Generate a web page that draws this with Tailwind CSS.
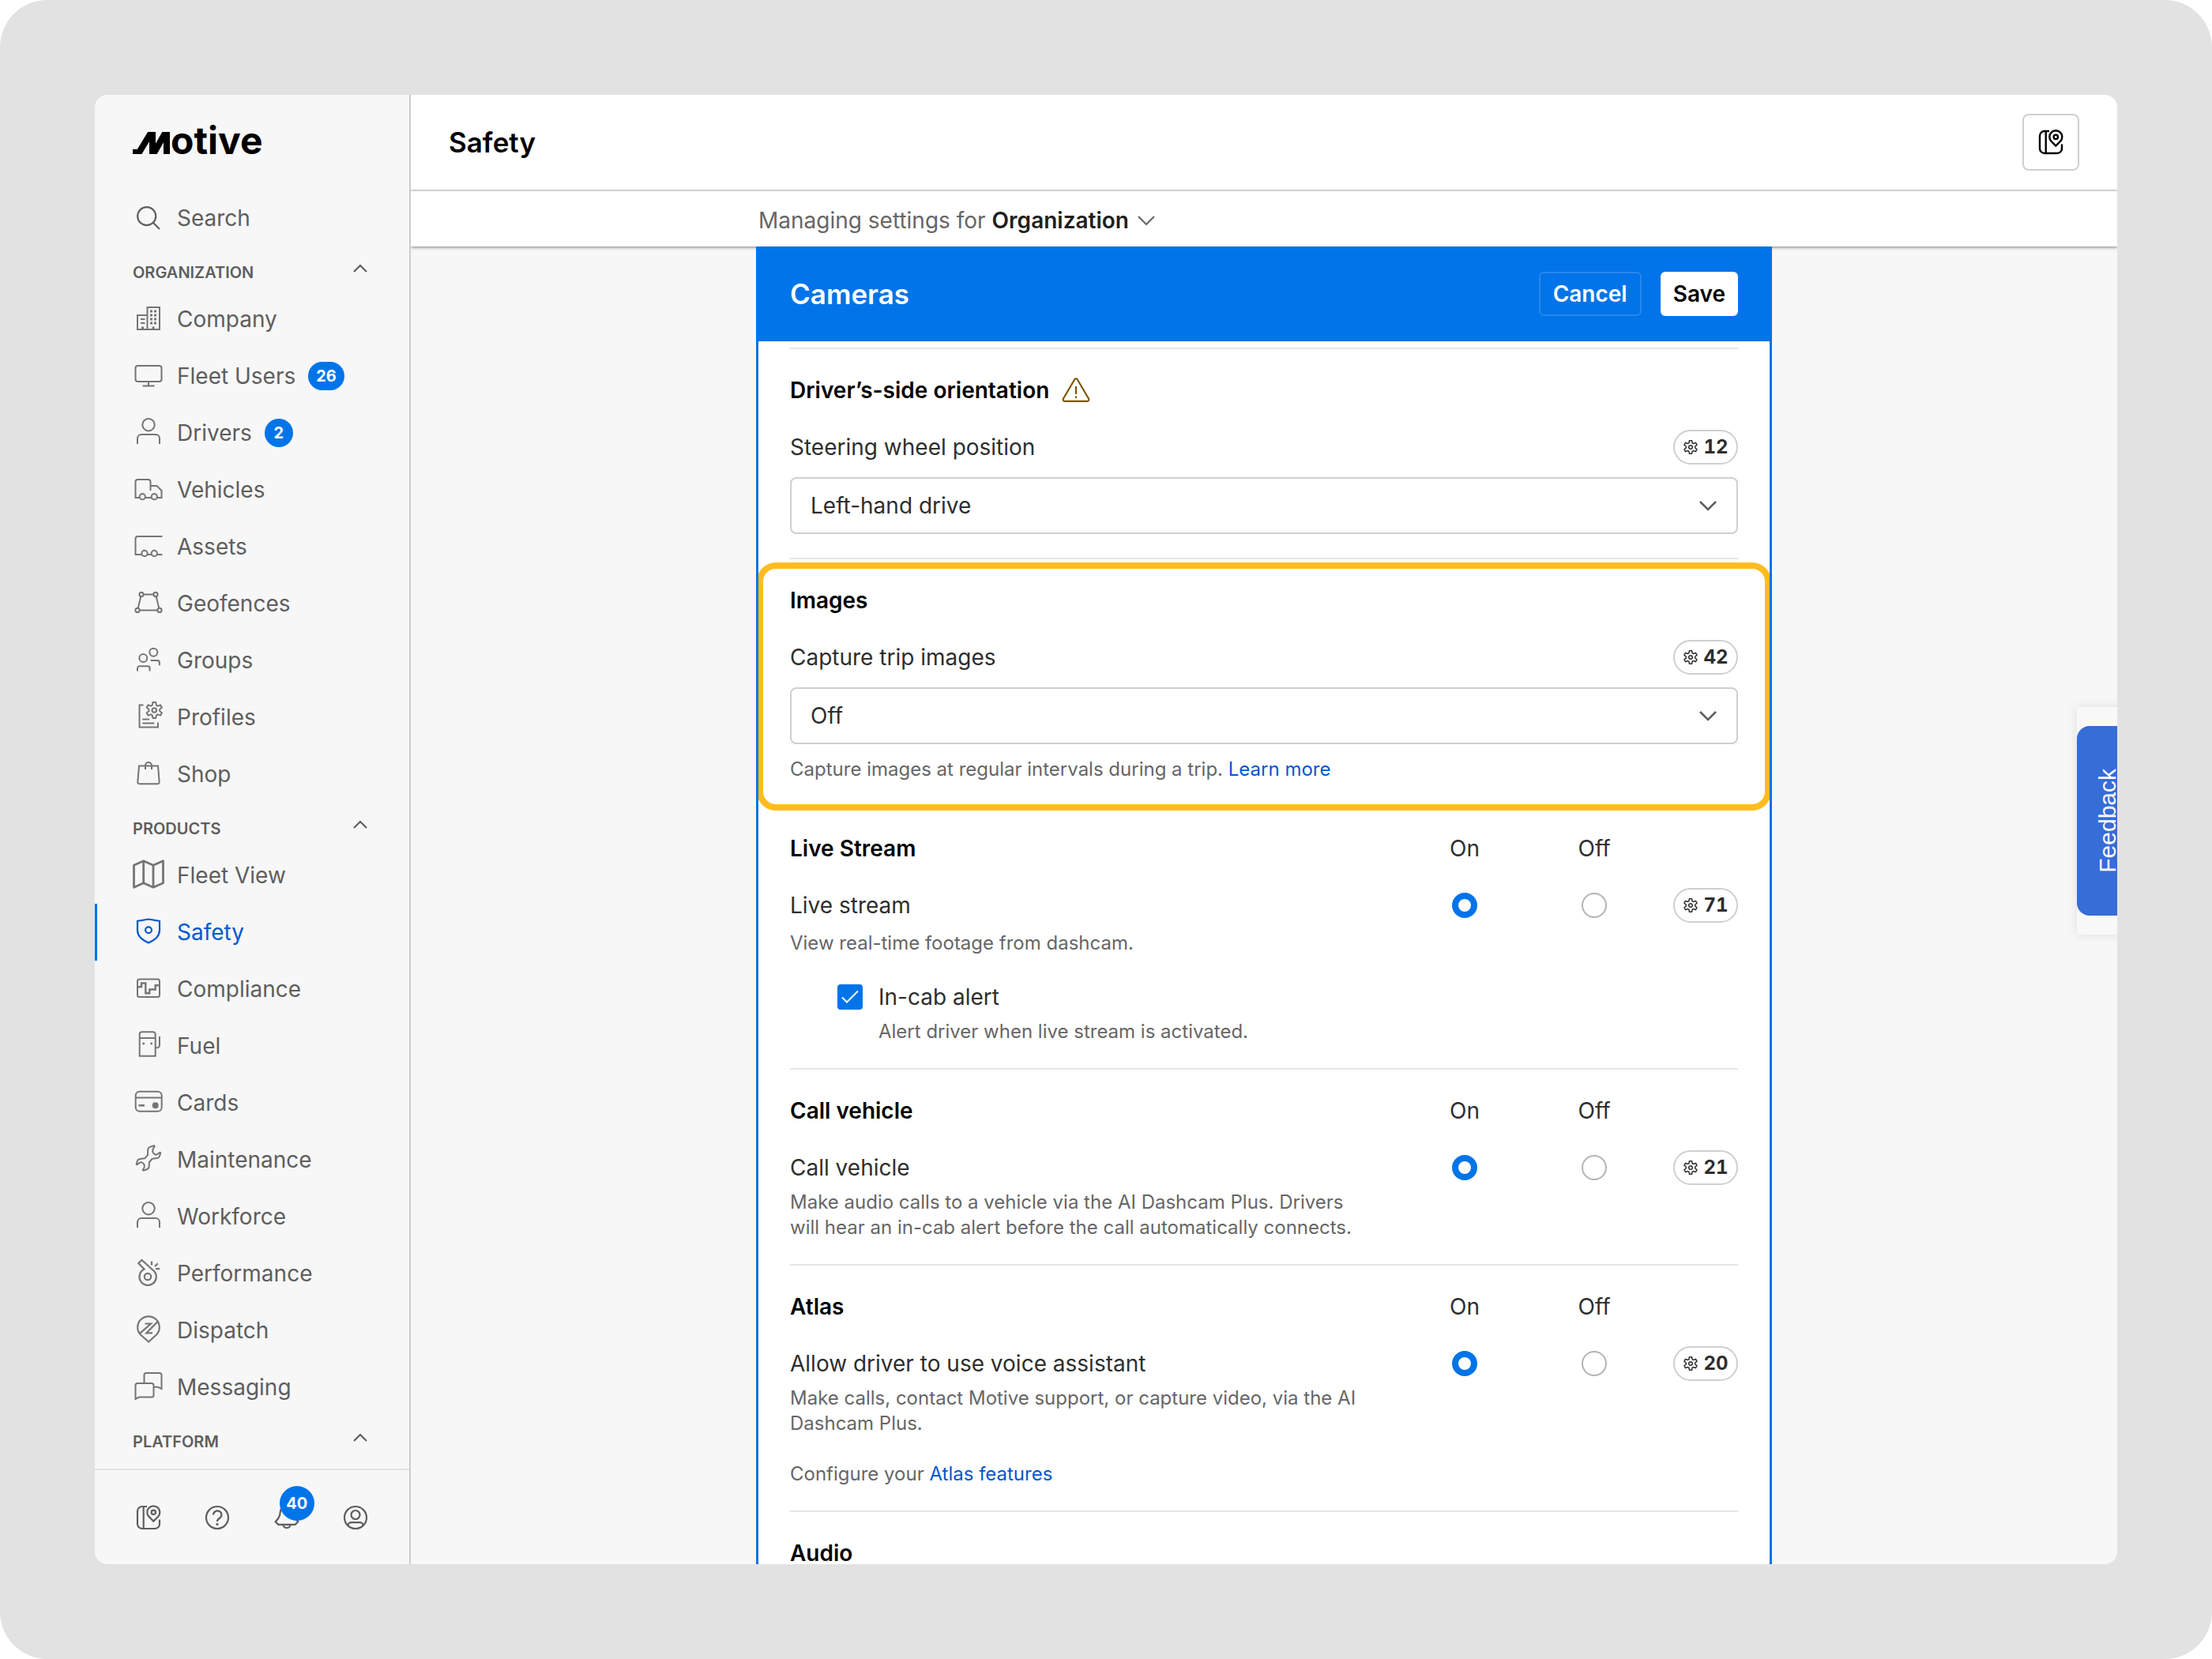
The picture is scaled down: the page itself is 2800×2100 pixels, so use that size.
<!DOCTYPE html>
<html lang="en">
<head>
  <meta charset="UTF-8">
  <meta name="viewport" content="width=device-width, initial-scale=1.0">
  <title>Safety - Cameras</title>
  <script src="https://cdn.jsdelivr.net/npm/@tailwindcss/browser@4"></script>
</head>
<body class="bg-white font-['Inter',sans-serif] text-[28px] leading-[44px] text-[#2e2e2e]">

<!-- Shared icons -->
<svg class="hidden">
  <symbol id="gear" viewBox="-12 -12 24 24" overflow="visible">
    <path d="M-2.6-6.3-1.8-10H1.8L2.6-6.3 4.2-5.4 7.8-6.6 9.6-3.4 6.8-.9V.9L9.6 3.4 7.8 6.6 4.2 5.4 2.6 6.3 1.8 10H-1.8L-2.6 6.3-4.2 5.4-7.8 6.6-9.6 3.4-6.8.9V-.9L-9.6-3.4-7.8-6.6-4.2-5.4Z"/>
    <circle r="2.8"/>
  </symbol>
  <symbol id="person" viewBox="0 0 40 40">
    <circle cx="20" cy="9.7" r="7.7"/>
    <path d="M6 34v-7a5 5 0 0 1 5-5h18a5 5 0 0 1 5 5v7"/>
  </symbol>
  <symbol id="map-book" viewBox="0 0 40 40">
    <path d="M18 6h-6a6 6 0 0 0-6 6v16a6 6 0 0 0 6 6h16a6 6 0 0 0 6-6v-5.5M13.7 6v28M26.3 24.6l-5.7-5.7a8 8 0 1 1 11.4 0z"/>
    <circle cx="26.3" cy="13.3" r="2.7"/>
  </symbol>
  <symbol id="chevron-up" viewBox="0 0 28 28">
    <path d="M6 18l8-8 8 8"/>
  </symbol>
  <symbol id="chevron-down" viewBox="0 0 28 28">
    <path d="M4 9l10 10L24 9"/>
  </symbol>
</svg>

<div class="h-screen rounded-[60px] bg-[#e2e2e2] p-[120px]">
  <div class="flex h-full overflow-hidden rounded-2xl bg-[#f7f7f7]">

    <!-- Sidebar -->
    <aside class="flex w-[400px] shrink-0 flex-col border-r-2 border-[#cccccc] text-[#5e5e5e]">
      <a href="#" aria-label="Motive" class="flex h-[120px] shrink-0 items-baseline px-12 pt-[34px] text-black">
        <svg class="h-7 w-12" viewBox="0 0 48 28" fill="none" stroke="currentColor" stroke-width="8" stroke-miterlimit="10">
          <path d="M0 26H8L25-2V30L43-2V30"/>
        </svg>
        <span class="text-[48px] font-bold leading-[48px]">otive</span>
      </a>

      <nav class="min-h-0 flex-1 overflow-hidden">
        <a href="#" class="flex h-[72px] items-center gap-4 px-12">
          <svg class="size-10" viewBox="0 0 40 40" fill="none" stroke="currentColor" stroke-width="2.2"><circle cx="17.7" cy="17.7" r="11.5"/><path d="M26 26l8 8"/></svg>
          Search
        </a>

        <button type="button" class="flex h-14 w-full items-center justify-between px-12 text-[20px] font-semibold">
          <span class="pt-[10px]">ORGANIZATION</span>
          <svg class="size-7" fill="none" stroke="currentColor" stroke-width="2.2"><use href="#chevron-up"/></svg>
        </button>
        <ul>
          <li><a href="#" class="flex h-[72px] items-center gap-4 px-12">
            <svg class="size-10 text-[#757575]" viewBox="0 0 40 40" fill="none" stroke="currentColor" stroke-width="2">
              <path d="M18.5 33V5H34v28H6V15h12.5M10 20h5.5M10 25h5.5"/>
              <path stroke-width="3" d="M22 10h3M27 10h3M22 15h3M27 15h3M22 20h3M27 20h3M22 25h3M27 25h3M24.5 31h3M11 31h3"/>
            </svg>
            Company
          </a></li>
          <li><a href="#" class="flex h-[72px] items-center gap-4 px-12">
            <svg class="size-10 text-[#757575]" viewBox="0 0 40 40" fill="none" stroke="currentColor" stroke-width="2"><rect x="3.5" y="7" width="33" height="20" rx="3"/><path d="M20 27v5M12.5 32.5h15"/></svg>
            Fleet Users
            <span class="flex h-9 min-w-9 items-center justify-center rounded-full bg-[#0074e8] px-[10px] text-[20px] font-bold text-white">26</span>
          </a></li>
          <li><a href="#" class="flex h-[72px] items-center gap-4 px-12">
            <svg class="size-10 text-[#757575]" fill="none" stroke="currentColor" stroke-width="2"><use href="#person"/></svg>
            Drivers
            <span class="flex h-9 min-w-9 items-center justify-center rounded-full bg-[#0074e8] px-[10px] text-[20px] font-bold text-white">2</span>
          </a></li>
          <li><a href="#" class="flex h-[72px] items-center gap-4 px-12">
            <svg class="size-10 text-[#757575]" viewBox="0 0 40 40" fill="none" stroke="currentColor" stroke-width="2"><path d="M9 30H3.5V10a3 3 0 0 1 3-3h13a3 3 0 0 1 3 3v11M22.5 15h8l6 6v9H31M16 30h8"/><circle cx="12.3" cy="28.7" r="3.6"/><circle cx="27.3" cy="28.7" r="3.6"/></svg>
            Vehicles
          </a></li>
          <li><a href="#" class="flex h-[72px] items-center gap-4 px-12">
            <svg class="size-10 text-[#757575]" viewBox="0 0 40 40" fill="none" stroke="currentColor" stroke-width="2"><path d="M37.5 7h-31a3 3 0 0 0-3 3v20H11M18.7 30h5M31 30h6.5"/><circle cx="15" cy="28.4" r="3.6"/><circle cx="27.3" cy="28.4" r="3.6"/></svg>
            Assets
          </a></li>
          <li><a href="#" class="flex h-[72px] items-center gap-4 px-12">
            <svg class="size-10 text-[#757575]" viewBox="0 0 40 40" fill="none" stroke="currentColor" stroke-width="2"><circle cx="11" cy="8.4" r="2.6"/><circle cx="29" cy="8.4" r="2.6"/><circle cx="6" cy="28.4" r="2.6"/><circle cx="34" cy="28.4" r="2.6"/><path d="M13.6 8.4h12.8M8.6 28.4h22.8M10.3 11 6.7 25.9M29.7 11l3.6 14.9"/></svg>
            Geofences
          </a></li>
          <li><a href="#" class="flex h-[72px] items-center gap-4 px-12">
            <svg class="size-10 text-[#757575]" viewBox="0 0 40 40" fill="none" stroke="currentColor" stroke-width="2"><circle cx="13.3" cy="17" r="5"/><circle cx="26.3" cy="9.7" r="5"/><path d="M6 33.5V30a2.7 2.7 0 0 1 2.7-2.7h10.2a2.7 2.7 0 0 1 2.7 2.7v3.5M22.7 20h8.5a2.7 2.7 0 0 1 2.7 2.7v3.5"/></svg>
            Groups
          </a></li>
          <li><a href="#" class="flex h-[72px] items-center gap-4 px-12">
            <svg class="size-10 text-[#757575]" viewBox="0 0 40 40" fill="none" stroke="currentColor" stroke-width="2"><path d="M13.5 4.5h-5v28H32v-6M12.3 22.5h8.7M12.3 27.5h15"/><use href="#gear" x="15.3" y="-1" width="24" height="24"/></svg>
            Profiles
          </a></li>
          <li><a href="#" class="flex h-[72px] items-center gap-4 px-12">
            <svg class="size-10 text-[#757575]" viewBox="0 0 40 40" fill="none" stroke="currentColor" stroke-width="2"><path d="M8 9.5h24L33.7 30a2.2 2.2 0 0 1-2.2 2.3h-23A2.2 2.2 0 0 1 6.3 30zM16 14V9a4 4 0 0 1 8 0v5"/></svg>
            Shop
          </a></li>
        </ul>

        <button type="button" class="flex h-14 w-full items-center justify-between px-12 text-[20px] font-semibold">
          <span class="pt-[10px]">PRODUCTS</span>
          <svg class="size-7" fill="none" stroke="currentColor" stroke-width="2.2"><use href="#chevron-up"/></svg>
        </button>
        <ul>
          <li><a href="#" class="flex h-[72px] items-center gap-4 px-12">
            <svg class="size-10 text-[#757575]" viewBox="0 0 40 40" fill="none" stroke="currentColor" stroke-width="2.8" stroke-linejoin="round"><path d="M1.5 7.2 13.7 1.7 26 7.2l12.5-5.5v28L26 35.2l-12.3-5.5L1.5 35.2zM13.7 1.7v28M26 7.2v28"/></svg>
            Fleet View
          </a></li>
          <li><a href="#" aria-current="page" class="flex h-[72px] items-center gap-4 border-l-3 border-[#0074e8] pl-[45px] pr-12 text-[#0057d0]">
            <svg class="size-10" viewBox="0 0 40 40" fill="none" stroke="currentColor" stroke-width="2.2"><path d="M20 3.5 34 6v11.5C34 25 28 30 20 33.500 12 30 6 25 6 17.500V6z"/><circle cx="20" cy="17.3" r="3.9"/></svg>
            Safety
          </a></li>
          <li><a href="#" class="flex h-[72px] items-center gap-4 px-12">
            <svg class="size-10 text-[#757575]" viewBox="0 0 40 40" fill="none" stroke="currentColor" stroke-width="2"><rect x="6" y="7.5" width="28" height="22.5" rx="2.5"/><path stroke-width="2.4" d="M6 17.300h5v-4.800h5.300v12.800h5v-4.800h7.400v-5.200H34"/></svg>
            Compliance
          </a></li>
          <li><a href="#" class="flex h-[72px] items-center gap-4 px-12">
            <svg class="size-10 text-[#757575]" viewBox="0 0 40 40" fill="none" stroke="currentColor" stroke-width="2"><path d="M8.7 32.7V5.3a3 3 0 0 1 3-3h14a3 3 0 0 1 3 3v27.4zM8.7 10h20M34 8v11a3.3 3.3 0 0 1-3.3 3.3h-2"/><path stroke-width="2.6" d="M12.4 17h2.6M22.4 17H25"/></svg>
            Fuel
          </a></li>
          <li><a href="#" class="flex h-[72px] items-center gap-4 px-12">
            <svg class="size-10 text-[#757575]" viewBox="0 0 40 40" fill="none" stroke="currentColor" stroke-width="2"><rect x="3.7" y="5.7" width="33" height="25" rx="5"/><path d="M4 13.5h32"/><path stroke-width="2.6" d="M7.5 23.3H15"/><circle cx="28.7" cy="23.3" r="3" fill="currentColor"/></svg>
            Cards
          </a></li>
          <li><a href="#" class="flex h-[72px] items-center gap-4 px-12">
            <svg class="size-10 text-[#757575]" viewBox="0 0 40 40" fill="none" stroke="currentColor" stroke-width="2" stroke-linejoin="round"><path d="M19.2 7c.5-2 1.6-2.8 3.2-3.4l4.3-1.3c.8-.2 1.3.6.8 1.2L25.8 6c-1.3 3.300-.3 6.500 3 7.500 1.500.4 2.700-.2 3.700-1.300l1.300-1.100c.7-.6 1.600-.2 1.400.7l-1.300 4c-.5 1.500-1.600 2.200-3.100 2.300l-6 .6-3.800 4.300-.4 6c-.3 1.800-1.200 2.600-2.800 3.200l-4 1.400c-.9.2-1.400-.6-.8-1.300l1.300-1.700c1.500-3-.1-6.400-3-7.200-1.700-.5-2.900.2-3.900 1.300l-1.300 1.200c-.7.5-1.600.1-1.400-.7l1.300-4c.5-1.400 1.500-2.100 3-2.300l6.200-.6 3.800-4.200z"/></svg>
            Maintenance
          </a></li>
          <li><a href="#" class="flex h-[72px] items-center gap-4 px-12">
            <svg class="size-10 text-[#757575]" fill="none" stroke="currentColor" stroke-width="2"><use href="#person"/></svg>
            Workforce
          </a></li>
          <li><a href="#" class="flex h-[72px] items-center gap-4 px-12">
            <svg class="size-10 text-[#757575]" viewBox="0 0 40 40" fill="none" stroke="currentColor" stroke-width="2.2"><path d="M11.5 3 7.3 7l7.2 7.5a10.7 10.7 0 1 0 13 3zM24 4.5v5M31.7 7.3 28 11M29 14.2h5.3"/><circle cx="19" cy="24" r="4.2"/></svg>
            Performance
          </a></li>
          <li><a href="#" class="flex h-[72px] items-center gap-4 px-12">
            <svg class="size-10 text-[#757575]" viewBox="0 0 40 40" fill="none" stroke="currentColor" stroke-width="2.2"><path d="M20 34.5l-9.8-8.7a13.8 13.8 0 1 1 19.6 0zM9 23.8 23 11.5h-7.5M32 8.6 17.3 23.3H25"/></svg>
            Dispatch
          </a></li>
          <li><a href="#" class="flex h-[72px] items-center gap-4 px-12">
            <svg class="size-10 text-[#757575]" viewBox="0 0 40 40" fill="none" stroke="currentColor" stroke-width="2"><path d="M3.5 34.8V17.5A2.5 2.5 0 0 1 6 15h18a2.5 2.5 0 0 1 2.5 2.5V30a2.5 2.5 0 0 1-2.5 2.5H8zM14.5 15V4.5A2.5 2.5 0 0 1 17 2h17a2.5 2.5 0 0 1 2.5 2.5V22L32 19.8h-5.5"/></svg>
            Messaging
          </a></li>
        </ul>

        <button type="button" class="flex h-14 w-full items-center justify-between px-12 text-[20px] font-semibold">
          <span class="pt-[10px]">PLATFORM</span>
          <svg class="size-7" fill="none" stroke="currentColor" stroke-width="2.2"><use href="#chevron-up"/></svg>
        </button>
      </nav>

      <div class="flex h-[121px] shrink-0 items-center justify-between border-t-2 border-[#e2e2e2] px-12">
        <button type="button" aria-label="Guide"><svg class="size-10" fill="none" stroke="currentColor" stroke-width="2.2"><use href="#map-book"/></svg></button>
        <button type="button" aria-label="Help">
          <svg class="size-10" viewBox="0 0 40 40" fill="none" stroke="currentColor" stroke-width="2.2"><circle cx="20" cy="20" r="14"/><path d="M15 16.5a5.2 5 0 1 1 8 4.2c-2 1.2-3 1.8-3 4.3"/><path stroke-width="2.8" d="M18.6 28.5h2.8"/></svg>
        </button>
        <button type="button" aria-label="Notifications" class="relative">
          <svg class="size-10" viewBox="0 0 40 40" fill="none" stroke="currentColor" stroke-width="2.2"><path d="M20 5.5c-5 0-8 3.500-8.300 8-.2 3.500-.8 5.500-2.500 7.500l-3.500 4.200 3.600 3.600h21.400l3.600-3.600-3.500-4.200c-1.700-2-2.300-4-2.500-7.500-.3-4.500-3.300-8-8.300-8zM15.500 29a4.500 4 0 0 0 9 0"/></svg>
          <span class="absolute -top-5 left-[11px] flex size-11 items-center justify-center rounded-full bg-[#0074e8] text-[20px] font-bold text-white">40</span>
        </button>
        <button type="button" aria-label="Account">
          <svg class="size-10" viewBox="0 0 40 40" fill="none" stroke="currentColor" stroke-width="2.2"><circle cx="20" cy="20" r="14"/><circle cx="20" cy="16.5" r="5.5"/><path d="M10.5 30c0-2.200 1.800-3.800 4-3.800h11c2.200 0 4 1.600 4 3.800"/></svg>
        </button>
      </div>
    </aside>

    <!-- Main column -->
    <main class="relative flex min-w-0 flex-1 flex-col overflow-hidden">
      <header class="flex h-[122px] shrink-0 items-center justify-between border-b-2 border-[#e6e6e6] bg-white px-12">
        <h1 class="text-[35px] font-semibold text-black">Safety</h1>
        <button type="button" aria-label="Open guide" class="flex size-[72px] items-center justify-center rounded-lg border-2 border-[#cfcfcf] text-black">
          <svg class="size-10" fill="none" stroke="currentColor" stroke-width="2.4"><use href="#map-book"/></svg>
        </button>
      </header>

      <div class="flex h-[70px] shrink-0 justify-center bg-white shadow-[0_1px_4px_rgba(0,0,0,0.5)]">
        <div class="flex w-[1280px] items-center pt-[3px]">
          <button type="button" class="flex items-center gap-2 text-[#666666]">Managing settings for <span class="font-semibold text-[#1f1f1f]">Organization</span>
            <svg class="size-7" fill="none" stroke="currentColor" stroke-width="2.2"><use href="#chevron-down"/></svg>
          </button>
        </div>
      </div>

      <form class="relative mx-auto min-h-0 w-[1286px] flex-1 overflow-hidden border-x-3 border-[#0074e8] bg-white">
        <div class="flex h-[120px] items-center justify-between bg-[#0074e8] px-10">
          <h2 class="text-[35px] font-semibold text-white">Cameras</h2>
          <div class="flex gap-6">
            <button type="button" class="flex h-14 items-center rounded-md border-2 border-[#2688ee] px-4 font-semibold text-white">Cancel</button>
            <button type="submit" class="flex h-14 items-center rounded-md bg-white px-4 font-semibold text-black">Save</button>
          </div>
        </div>

        <div class="px-10 pt-2">
          <!-- Orientation -->
          <section class="border-t-2 border-[#e6e6e6] py-[30px]">
            <h3 class="flex items-center gap-4 font-semibold text-black">Driver’s-side orientation
              <svg class="size-9" viewBox="0 0 36 36" fill="none" stroke="#7f5700" stroke-width="2.2" stroke-linejoin="round"><path d="M16.3 4.2 1.9 28.8a2 2 0 0 0 1.7 3h28.8a2 2 0 0 0 1.7-3L19.7 4.2a2 2 0 0 0-3.4 0zM18 13v10M18 25.5V28"/></svg>
            </h3>
            <div class="mt-7 flex items-center justify-between">
              <label for="wheel">Steering wheel position</label>
              <button type="button" class="flex h-11 w-[82px] items-center justify-center gap-[6px] rounded-full border-2 border-[#cfcfcf] text-[24px] font-bold tabular-nums"><svg class="size-5" fill="none" stroke="currentColor" stroke-width="1.8"><use href="#gear"/></svg>12</button>
            </div>
            <div class="relative mt-4">
              <select id="wheel" class="h-[72px] w-full appearance-none rounded-lg border-2 border-[#cfcfcf] bg-white px-6">
                <option>Left-hand drive</option>
                <option>Right-hand drive</option>
              </select>
              <svg class="pointer-events-none absolute right-6 top-[22px] size-7 text-[#5e5e5e]" fill="none" stroke="currentColor" stroke-width="2.6"><use href="#chevron-down"/></svg>
            </div>
          </section>

          <!-- Images -->
          <section class="relative border-t-2 border-[#e6e6e6] py-[30px]">
            <div class="pointer-events-none absolute -inset-x-[42px] -bottom-[6px] top-1 rounded-[24px] border-8 border-[#ffbc1f]"></div>
            <h3 class="font-semibold text-black">Images</h3>
            <div class="mt-7 flex items-center justify-between">
              <label for="trip-images">Capture trip images</label>
              <button type="button" class="flex h-11 w-[82px] items-center justify-center gap-[6px] rounded-full border-2 border-[#cfcfcf] text-[24px] font-bold tabular-nums"><svg class="size-5" fill="none" stroke="currentColor" stroke-width="1.8"><use href="#gear"/></svg>42</button>
            </div>
            <div class="relative mt-4">
              <select id="trip-images" class="h-[72px] w-full appearance-none rounded-lg border-2 border-[#cfcfcf] bg-white px-6">
                <option>Off</option>
                <option>On</option>
              </select>
              <svg class="pointer-events-none absolute right-6 top-[22px] size-7 text-[#5e5e5e]" fill="none" stroke="currentColor" stroke-width="2.6"><use href="#chevron-down"/></svg>
            </div>
            <p class="mt-4 text-[24px] leading-8 text-[#666666]">Capture images at regular intervals during a trip. <a href="#" class="text-[#0057d0]">Learn more</a></p>
          </section>

          <!-- Live Stream -->
          <section class="border-t-2 border-[#e6e6e6] py-[30px]">
            <div class="grid grid-cols-[1fr_164px_164px_100px]">
              <h3 class="font-semibold text-black">Live Stream</h3>
              <span id="stream-on" class="text-center">On</span>
              <span id="stream-off" class="text-center">Off</span>
            </div>
            <div class="mt-7 grid grid-cols-[1fr_164px_164px_100px] items-center">
              <span id="stream">Live stream</span>
              <input type="radio" name="stream" checked aria-labelledby="stream stream-on" class="size-8 appearance-none justify-self-center rounded-full border-2 border-[#b3b3b3] checked:border-8 checked:border-[#0074e8]">
              <input type="radio" name="stream" aria-labelledby="stream stream-off" class="size-8 appearance-none justify-self-center rounded-full border-2 border-[#b3b3b3] checked:border-8 checked:border-[#0074e8]">
              <button type="button" class="flex h-11 w-[82px] items-center justify-center gap-[6px] justify-self-end rounded-full border-2 border-[#cfcfcf] text-[24px] font-bold tabular-nums"><svg class="size-5" fill="none" stroke="currentColor" stroke-width="1.8"><use href="#gear"/></svg>71</button>
            </div>
            <p class="mt-[10px] text-[24px] leading-8 text-[#666666]">View real-time footage from dashcam.</p>
            <div class="mt-[30px] grid grid-cols-[32px_1fr] items-center gap-x-5 pl-[60px]">
              <span class="relative flex size-8">
                <input type="checkbox" id="incab" checked class="size-8 appearance-none rounded-sm border-2 border-[#b3b3b3] checked:border-[#0074e8] checked:bg-[#0074e8]">
                <svg class="pointer-events-none absolute inset-0 size-8" viewBox="0 0 32 32" fill="none" stroke="#ffffff" stroke-width="2"><path d="M6 16.5l6 6L26 8.500"/></svg>
              </span>
              <label for="incab">In-cab alert</label>
              <p class="col-start-2 mt-[6px] text-[24px] leading-8 text-[#666666]">Alert driver when live stream is activated.</p>
            </div>
          </section>

          <!-- Call vehicle -->
          <section class="border-t-2 border-[#e6e6e6] py-[30px]">
            <div class="grid grid-cols-[1fr_164px_164px_100px]">
              <h3 class="font-semibold text-black">Call vehicle</h3>
              <span id="call-on" class="text-center">On</span>
              <span id="call-off" class="text-center">Off</span>
            </div>
            <div class="mt-7 grid grid-cols-[1fr_164px_164px_100px] items-center">
              <span id="call">Call vehicle</span>
              <input type="radio" name="call" checked aria-labelledby="call call-on" class="size-8 appearance-none justify-self-center rounded-full border-2 border-[#b3b3b3] checked:border-8 checked:border-[#0074e8]">
              <input type="radio" name="call" aria-labelledby="call call-off" class="size-8 appearance-none justify-self-center rounded-full border-2 border-[#b3b3b3] checked:border-8 checked:border-[#0074e8]">
              <button type="button" class="flex h-11 w-[82px] items-center justify-center gap-[6px] justify-self-end rounded-full border-2 border-[#cfcfcf] text-[24px] font-bold tabular-nums"><svg class="size-5" fill="none" stroke="currentColor" stroke-width="1.8"><use href="#gear"/></svg>21</button>
            </div>
            <p class="mt-[6px] max-w-[728px] text-[24px] leading-8 text-[#666666]">Make audio calls to a vehicle via the AI Dashcam Plus. Drivers will hear an in-cab alert before the call automatically connects.</p>
          </section>

          <!-- Atlas -->
          <section class="border-t-2 border-[#e6e6e6] py-[30px]">
            <div class="grid grid-cols-[1fr_164px_164px_100px]">
              <h3 class="font-semibold text-black">Atlas</h3>
              <span id="atlas-on" class="text-center">On</span>
              <span id="atlas-off" class="text-center">Off</span>
            </div>
            <div class="mt-7 grid grid-cols-[1fr_164px_164px_100px] items-center">
              <span id="atlas">Allow driver to use voice assistant</span>
              <input type="radio" name="atlas" checked aria-labelledby="atlas atlas-on" class="size-8 appearance-none justify-self-center rounded-full border-2 border-[#b3b3b3] checked:border-8 checked:border-[#0074e8]">
              <input type="radio" name="atlas" aria-labelledby="atlas atlas-off" class="size-8 appearance-none justify-self-center rounded-full border-2 border-[#b3b3b3] checked:border-8 checked:border-[#0074e8]">
              <button type="button" class="flex h-11 w-[82px] items-center justify-center gap-[6px] justify-self-end rounded-full border-2 border-[#cfcfcf] text-[24px] font-bold tabular-nums"><svg class="size-5" fill="none" stroke="currentColor" stroke-width="1.8"><use href="#gear"/></svg>20</button>
            </div>
            <p class="mt-[6px] max-w-[728px] text-[24px] leading-8 text-[#666666]">Make calls, contact Motive support, or capture video, via the AI Dashcam Plus.</p>
            <p class="mt-8 text-[24px] leading-8 text-[#666666]">Configure your <a href="#" class="text-[#0057d0]">Atlas features</a></p>
          </section>

          <!-- Audio -->
          <section class="border-t-2 border-[#e6e6e6] py-[30px]">
            <h3 class="font-semibold text-black">Audio</h3>
          </section>
        </div>
      </form>

      <!-- Feedback tab, partly off the right edge -->
      <div class="absolute -right-[27px] top-[775px] bg-[#f8f8f8] py-6 shadow-[0_0_12px_rgba(0,0,0,0.1)]">
        <button type="button" class="flex h-[240px] w-[78px] items-center justify-center rounded-l-2xl bg-[#366dd6] font-['Liberation_Sans',sans-serif] text-[30px] text-white"><span class="rotate-180 [writing-mode:vertical-rl]">Feedback</span></button>
      </div>
    </main>
  </div>
</div>
</body>
</html>
